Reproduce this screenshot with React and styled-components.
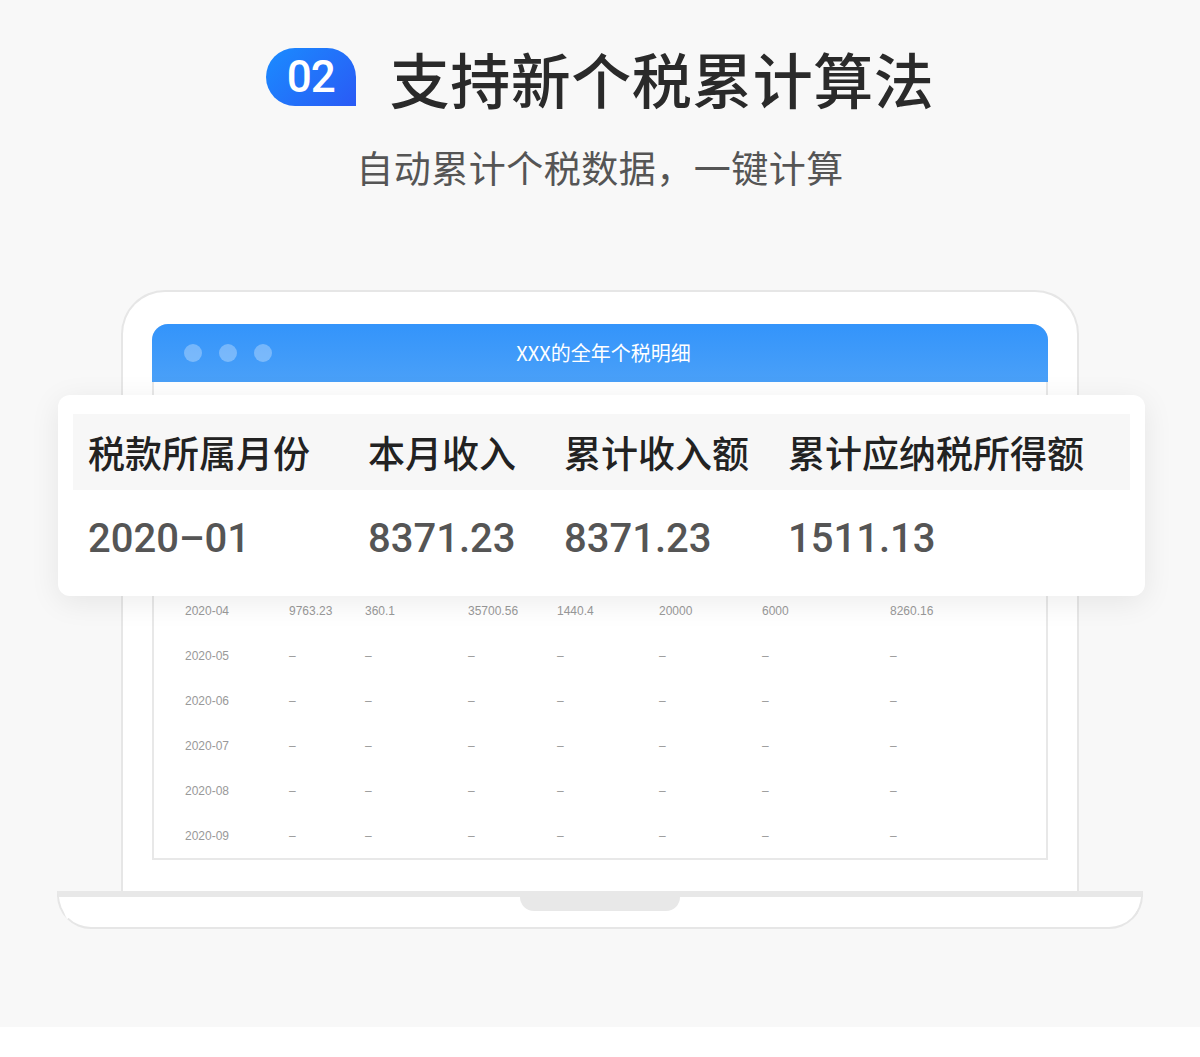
import styled, { createGlobalStyle } from "styled-components";

const Global = createGlobalStyle`
  body { margin: 0; background: #fff; font-family: "PingFang SC", "Noto Sans CJK SC", "Noto Sans", sans-serif; }
`;

const Page = styled.div`
  width: 1200px;
  height: 1027px;
  background: #f8f8f8;
  display: flex;
  flex-direction: column;
  align-items: center;
  overflow: hidden;
`;

const TitleRow = styled.div`
  display: flex;
  align-items: center;
  gap: 34px;
  margin-top: 42px;
  height: 70px;
`;

const Badge = styled.div`
  width: 90px;
  height: 58px;
  border-radius: 29px 29px 0 29px;
  background: linear-gradient(135deg, #1a8cff, #2a5af5);
  color: #fff;
  font: 500 44px "Roboto", "Noto Sans", sans-serif;
  display: flex;
  align-items: center;
  justify-content: center;
  letter-spacing: -1px;
`;

const Title = styled.h1`
  margin: 0;
  font-size: 60px;
  font-weight: 500;
  color: #2a2a2a;
  letter-spacing: 0.5px;
`;

const Subtitle = styled.div`
  margin-top: 28px;
  font-size: 37px;
  color: #555;
  letter-spacing: 0.5px;
`;

const Stage = styled.div`
  position: relative;
  width: 1200px;
  margin-top: 96px;
  display: flex;
  flex-direction: column;
  align-items: center;
`;

const Lid = styled.div`
  width: 958px;
  height: 601px;
  box-sizing: border-box;
  border: 2px solid #e6e6e6;
  border-bottom: none;
  border-radius: 44px 44px 0 0;
  background: #fff;
  padding: 32px 29px 0;
`;

const Window = styled.div`
  border: 2px solid #e8e8e8;
  border-top: none;
  border-radius: 16px 16px 0 0;
  height: 536px;
  box-sizing: border-box;
  display: flex;
  flex-direction: column;
`;

const WinBar = styled.div`
  height: 60px;
  margin: 0 -2px;
  border-radius: 16px 16px 0 0;
  background: linear-gradient(180deg, #3394fb, #4aa0f8);
  display: flex;
  align-items: center;
  padding-left: 32px;
  gap: 17px;
`;

const Dot = styled.span`
  width: 18px;
  height: 18px;
  border-radius: 50%;
  background: rgba(255, 255, 255, 0.3);
`;

const WinTitle = styled.div`
  flex: 1;
  text-align: center;
  color: #fff;
  font-size: 20px;
  margin-right: 130px;
  margin-top: -2px;
`;

const Rows = styled.div`
  padding-top: 206px;
`;

const Row = styled.div`
  display: grid;
  grid-template-columns: 104px 76px 103px 89px 102px 103px 128px 1fr;
  padding-left: 31px;
  height: 45px;
  align-items: center;
  font: 12px "Liberation Sans", "Noto Sans", sans-serif;
  color: #999;
`;

const Base = styled.div`
  width: 1086px;
  height: 38px;
  box-sizing: border-box;
  border: 2px solid #e6e6e6;
  border-top: 6px solid #e8e8e8;
  border-radius: 0 0 34px 34px;
  background: #fff;
  display: flex;
  justify-content: center;
`;

const Notch = styled.div`
  width: 160px;
  height: 14px;
  background: #e8e8e8;
  border-radius: 0 0 14px 14px;
`;

const Card = styled.div`
  position: absolute;
  left: 58px;
  top: 105px;
  width: 1087px;
  height: 201px;
  box-sizing: border-box;
  padding: 19px 15px 0;
  background: #fff;
  border-radius: 12px;
  box-shadow: 0 6px 30px rgba(0, 0, 0, 0.08);
`;

const CardRow = styled.div`
  display: grid;
  grid-template-columns: 280px 196px 224px 1fr;
  padding-left: 15px;
  height: ${(p) => (p.$head ? "76px" : "96px")};
  align-items: center;
  background: ${(p) => (p.$head ? "#f7f7f7" : "transparent")};
  font-size: ${(p) => (p.$head ? "37px" : "40px")};
  font-weight: 500;
  color: ${(p) => (p.$head ? "#222" : "#555")};
  font-family: ${(p) =>
    p.$head ? '"Noto Sans CJK SC", sans-serif' : '"Roboto", "Noto Sans", sans-serif'};
`;

const rows = [
  ["2020-04", "9763.23", "360.1", "35700.56", "1440.4", "20000", "6000", "8260.16"],
  ...["05", "06", "07", "08", "09"].map((m) => [`2020-${m}`, "–", "–", "–", "–", "–", "–", "–"]),
];

export default function App() {
  return (
    <>
      <Global />
      <Page>
        <TitleRow>
          <Badge>02</Badge>
          <Title>支持新个税累计算法</Title>
        </TitleRow>
        <Subtitle>自动累计个税数据，一键计算</Subtitle>
        <Stage>
          <Lid>
            <Window>
              <WinBar>
                <Dot />
                <Dot />
                <Dot />
                <WinTitle>XXX的全年个税明细</WinTitle>
              </WinBar>
              <Rows>
                {rows.map((r) => (
                  <Row key={r[0]}>
                    {r.map((c, i) => (
                      <span key={i}>{c}</span>
                    ))}
                  </Row>
                ))}
              </Rows>
            </Window>
          </Lid>
          <Base>
            <Notch />
          </Base>
          <Card>
            <CardRow $head>
              <span>税款所属月份</span>
              <span>本月收入</span>
              <span>累计收入额</span>
              <span>累计应纳税所得额</span>
            </CardRow>
            <CardRow>
              <span>2020–01</span>
              <span>8371.23</span>
              <span>8371.23</span>
              <span>1511.13</span>
            </CardRow>
          </Card>
        </Stage>
      </Page>
    </>
  );
}
